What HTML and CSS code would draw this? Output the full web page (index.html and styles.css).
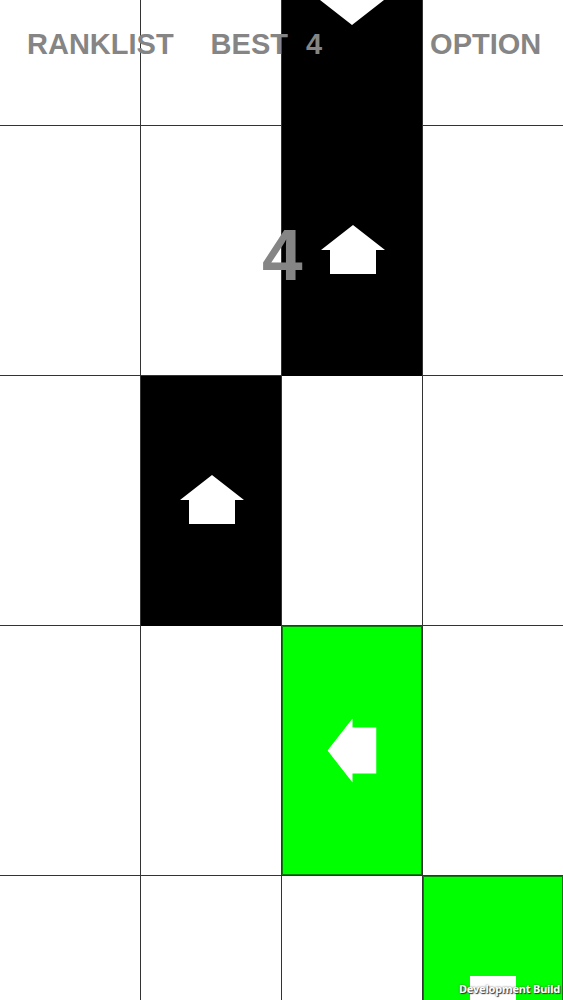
FILE: index.html
```html
<!DOCTYPE html>
<html>
<head>
<meta charset="utf-8">
<link rel="stylesheet" href="styles.css">
</head>
<body>
<div class="screen">
  <div class="board">
    <div class="tile"></div>
    <div class="tile"></div>
    <div class="tile black"><svg class="arrow down" viewBox="0 0 64 49"><polygon points="32,0 64,25 55,25 55,49 9,49 9,25 0,25"/></svg></div>
    <div class="tile"></div>

    <div class="tile"></div>
    <div class="tile"></div>
    <div class="tile black"><svg class="arrow" viewBox="0 0 64 49"><polygon points="32,0 64,25 55,25 55,49 9,49 9,25 0,25"/></svg></div>
    <div class="tile"></div>

    <div class="tile"></div>
    <div class="tile black"><svg class="arrow" viewBox="0 0 64 49"><polygon points="32,0 64,25 55,25 55,49 9,49 9,25 0,25"/></svg></div>
    <div class="tile"></div>
    <div class="tile"></div>

    <div class="tile"></div>
    <div class="tile"></div>
    <div class="tile green"><svg class="arrow left" viewBox="0 0 64 49"><polygon points="32,0 64,25 55,25 55,49 9,49 9,25 0,25"/></svg></div>
    <div class="tile"></div>

    <div class="tile"></div>
    <div class="tile"></div>
    <div class="tile"></div>
    <div class="tile green"><svg class="arrow down" viewBox="0 0 64 49"><polygon points="32,0 64,25 55,25 55,49 9,49 9,25 0,25"/></svg></div>
  </div>

  <div class="hud">
    <span class="hud-item ranklist">RANKLIST</span>
    <span class="hud-item best">BEST</span>
    <span class="hud-item best-val">4</span>
    <span class="hud-item option">OPTION</span>
  </div>

  <div class="score">4</div>

  <div class="devbuild">Development Build</div>
</div>
</body>
</html>
```

FILE: styles.css
```css
html, body {
  margin: 0;
  padding: 0;
  background: #ffffff;
}

.screen {
  position: relative;
  width: 563px;
  height: 1000px;
  overflow: hidden;
  font-family: "Liberation Sans", Arial, sans-serif;
}

.board {
  display: grid;
  grid-template-columns: repeat(4, 140px);
  grid-template-rows: repeat(5, 249px);
  gap: 1px;
  background: #333333;
  margin-top: -124px;
}

.tile {
  background: #ffffff;
  display: flex;
  align-items: center;
  justify-content: center;
}

.tile.black {
  background: #000000;
  box-shadow: 0 1px 0 #000000;
}

.tile.green {
  background: #00ff00;
  box-shadow: inset 0 0 0 1px #0a7a0a;
}

.arrow {
  width: 64px;
  height: 49px;
  fill: #ffffff;
  transform: translate(1px, -1px);
}

.arrow.down {
  transform: rotate(180deg);
}

.arrow.left {
  transform: rotate(-90deg);
}

.hud {
  position: absolute;
  top: 30px;
  left: 0;
  width: 563px;
  display: flex;
  font-weight: bold;
  font-size: 29px;
  line-height: 29px;
  color: #858585;
}

.ranklist { margin-left: 27px; }
.best { margin-left: 37px; }
.best-val { margin-left: 18px; }
.option { margin-left: 108px; }

.score {
  position: absolute;
  top: 218px;
  left: 262px;
  font-weight: bold;
  font-size: 73px;
  line-height: 73px;
  color: #858585;
}

.devbuild {
  position: absolute;
  right: 3px;
  bottom: 4px;
  font-family: "Noto Sans", "Liberation Sans", sans-serif;
  font-weight: bold;
  font-size: 11px;
  line-height: 14px;
  color: #ffffff;
  text-shadow: 1px 1px 1px #333333, 0 0 2px #555555;
  letter-spacing: -0.2px;
}
```
